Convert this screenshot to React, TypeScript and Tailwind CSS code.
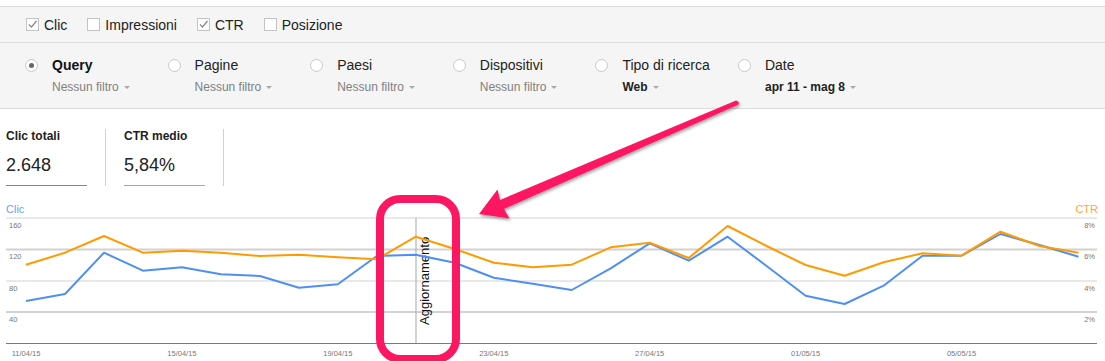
import React from "react"

const clic = [301, 294, 252.7, 270.7, 267.3, 274.3, 276, 287.7, 284.3, 256, 254.7, 262.7, 277.7, 283.7, 290, 268.3, 243.3, 260.7, 236.7, 266, 295.7, 304, 285.7, 255.7, 255.7, 234, 245, 256.7]
const ctr = [264.7, 252.7, 236, 252.7, 250.7, 252.7, 256, 254.7, 257.3, 259.3, 236.7, 249, 262.7, 267.3, 264.7, 247.3, 242.7, 258, 226, 246, 265, 275.7, 262.3, 253.3, 255.7, 231.7, 246, 252.7]
const xAt = (i: number) => 26 + i * 38.98
const toPoints = (arr: number[]) => arr.map((y, i) => `${xAt(i).toFixed(1)},${y}`).join(" ")

const dates = ["11/04/15", "15/04/15", "19/04/15", "23/04/15", "27/04/15", "01/05/15", "05/05/15"]
const grid = [218, 249.5, 281, 312]
const leftTicks = ["160", "120", "80", "40"]
const rightTicks = ["8%", "6%", "4%", "2%"]

const Caret = () => (
  <span className="ml-[5px] inline-block h-0 w-0 border-x-[3px] border-t-[3px] border-x-transparent border-t-[#aaa] align-middle" />
)

const Checkbox = ({ checked, label }: { checked?: boolean; label: string }) => (
  <div className="mr-[20px] flex items-center">
    <span className="flex h-[13px] w-[13px] items-center justify-center border border-[#c4c4c4] bg-white">
      {checked && (
        <svg width="11" height="11" viewBox="0 0 11 11">
          <path d="M2 5.5 L4.5 8 L9.5 2" fill="none" stroke="#8a8a8a" strokeWidth="1.3" />
        </svg>
      )}
    </span>
    <span className="ml-[5px] text-[14px] leading-[16px] text-[#222]">{label}</span>
  </div>
)

const filters = [
  { title: "Query", sub: "Nessun filtro", selected: true },
  { title: "Pagine", sub: "Nessun filtro" },
  { title: "Paesi", sub: "Nessun filtro" },
  { title: "Dispositivi", sub: "Nessun filtro" },
  { title: "Tipo di ricerca", sub: "Web", strong: true },
  { title: "Date", sub: "apr 11 - mag 8", strong: true },
]

const FilterItem = ({ title, sub, selected, strong }: { title: string; sub: string; selected?: boolean; strong?: boolean }) => (
  <div className="flex w-[142.6px] items-start pt-[14px]">
    <span className="mt-[2px] flex h-[13px] w-[13px] shrink-0 items-center justify-center rounded-full border border-[#c8c8c8] bg-white">
      {selected && <span className="h-[5px] w-[5px] rounded-full bg-[#666]" />}
    </span>
    <div className="ml-[14px] whitespace-nowrap">
      <div className={`text-[14px] leading-[16px] ${selected ? "font-bold text-[#111]" : "text-[#222]"}`}>{title}</div>
      <div className={`mt-[7px] text-[12px] leading-[14px] ${strong ? "font-bold text-[#222]" : "text-[#808080]"}`}>
        {sub}
        <Caret />
      </div>
    </div>
  </div>
)

const Stat = ({ label, value, color }: { label: string; value: string; color: string }) => (
  <div className={`w-[81px] border-b pb-[9px] ${color}`}>
    <div className="text-[12px] font-bold leading-[14px] text-[#222]">{label}</div>
    <div className="mt-[11px] text-[18px] leading-[22px] text-[#222]">{value}</div>
  </div>
)

const Chart = () => (
  <svg width="1105" height="161" viewBox="0 200 1105 161" className="mt-[14px] block">
    <text x="6" y="213" fontSize="11" fill="#6f9ef0">Clic</text>
    <text x="1098" y="213" fontSize="11" fill="#ffa43a" textAnchor="end">CTR</text>
    {grid.map((y, i) => (
      <line key={y} x1="6" x2="1097" y1={y} y2={y} stroke="#d2d2d2" strokeWidth={i % 2 ? 2 : 1} />
    ))}
    <line x1="6" x2="1097" y1="343.5" y2="343.5" stroke="#7a7a7a" strokeWidth="1" />
    {leftTicks.map((t, i) => (
      <text key={t} x="9" y={grid[i] + 9.5} fontSize="7.5" fill="#777">{t}</text>
    ))}
    {rightTicks.map((t, i) => (
      <text key={t} x="1095" y={grid[i] + 9.5} fontSize="7.5" fill="#777" textAnchor="end">{t}</text>
    ))}
    {dates.map((d, i) => (
      <text key={d} x={xAt(i * 4)} y="355.5" fontSize="7.5" fill="#777" textAnchor="middle">{d}</text>
    ))}
    <line x1="416" x2="416" y1="218" y2="343" stroke="#b5b5b5" strokeWidth="1.2" />
    <text transform="translate(428.5 325) rotate(-90)" fontSize="13" fill="#111">Aggiornamento</text>
    <polyline points={toPoints(clic)} fill="none" stroke="#4f8ff5" strokeWidth="2" strokeLinejoin="round" />
    <polyline points={toPoints(ctr)} fill="none" stroke="#ff9b00" strokeWidth="2" strokeLinejoin="round" />
  </svg>
)

const Annotation = () => (
  <svg className="pointer-events-none absolute left-0 top-0" width="1105" height="361" viewBox="0 0 1105 361">
    <defs>
      <filter id="shadow" x="-10%" y="-10%" width="120%" height="130%">
        <feDropShadow dx="1" dy="2" stdDeviation="1.5" floodColor="#000" floodOpacity="0.35" />
      </filter>
    </defs>
    <rect x="380" y="199" width="76" height="160" rx="20" fill="none" stroke="#fd1762" strokeWidth="8" />
    <path
      d="M479 214 L497.5 189.5 L500 200 L736 100.5 Q740 101.5 738.5 104.5 L504 209 L509.5 218.5 Z"
      fill="#fd1762"
      filter="url(#shadow)"
    />
  </svg>
)

const App = () => {
  return (
    <div className="relative h-[361px] w-[1105px] overflow-hidden bg-white font-['Liberation_Sans',Arial,sans-serif] text-[#222]">
      <div className="h-[6px]" />
      <div className="flex h-[37px] items-center border-y border-[#dcdcdc] bg-[#f5f5f5] pl-[26px]">
        <Checkbox checked label="Clic" />
        <Checkbox label="Impressioni" />
        <Checkbox checked label="CTR" />
        <Checkbox label="Posizione" />
      </div>
      <div className="flex h-[66px] border-b border-[#dcdcdc] bg-[#f5f5f5] pl-[25px]">
        {filters.map((f) => (
          <FilterItem key={f.title} {...f} />
        ))}
      </div>
      <div className="mt-[20px] flex pl-[6px]">
        <Stat label="Clic totali" value="2.648" color="border-[#4f8ff5]" />
        <div className="mx-[18px] w-px bg-[#d0d0d0]" />
        <Stat label="CTR medio" value="5,84%" color="border-[#ff9b00]" />
        <div className="ml-[18px] w-px bg-[#d0d0d0]" />
      </div>
      <Chart />
      <Annotation />
    </div>
  )
}

export default App
